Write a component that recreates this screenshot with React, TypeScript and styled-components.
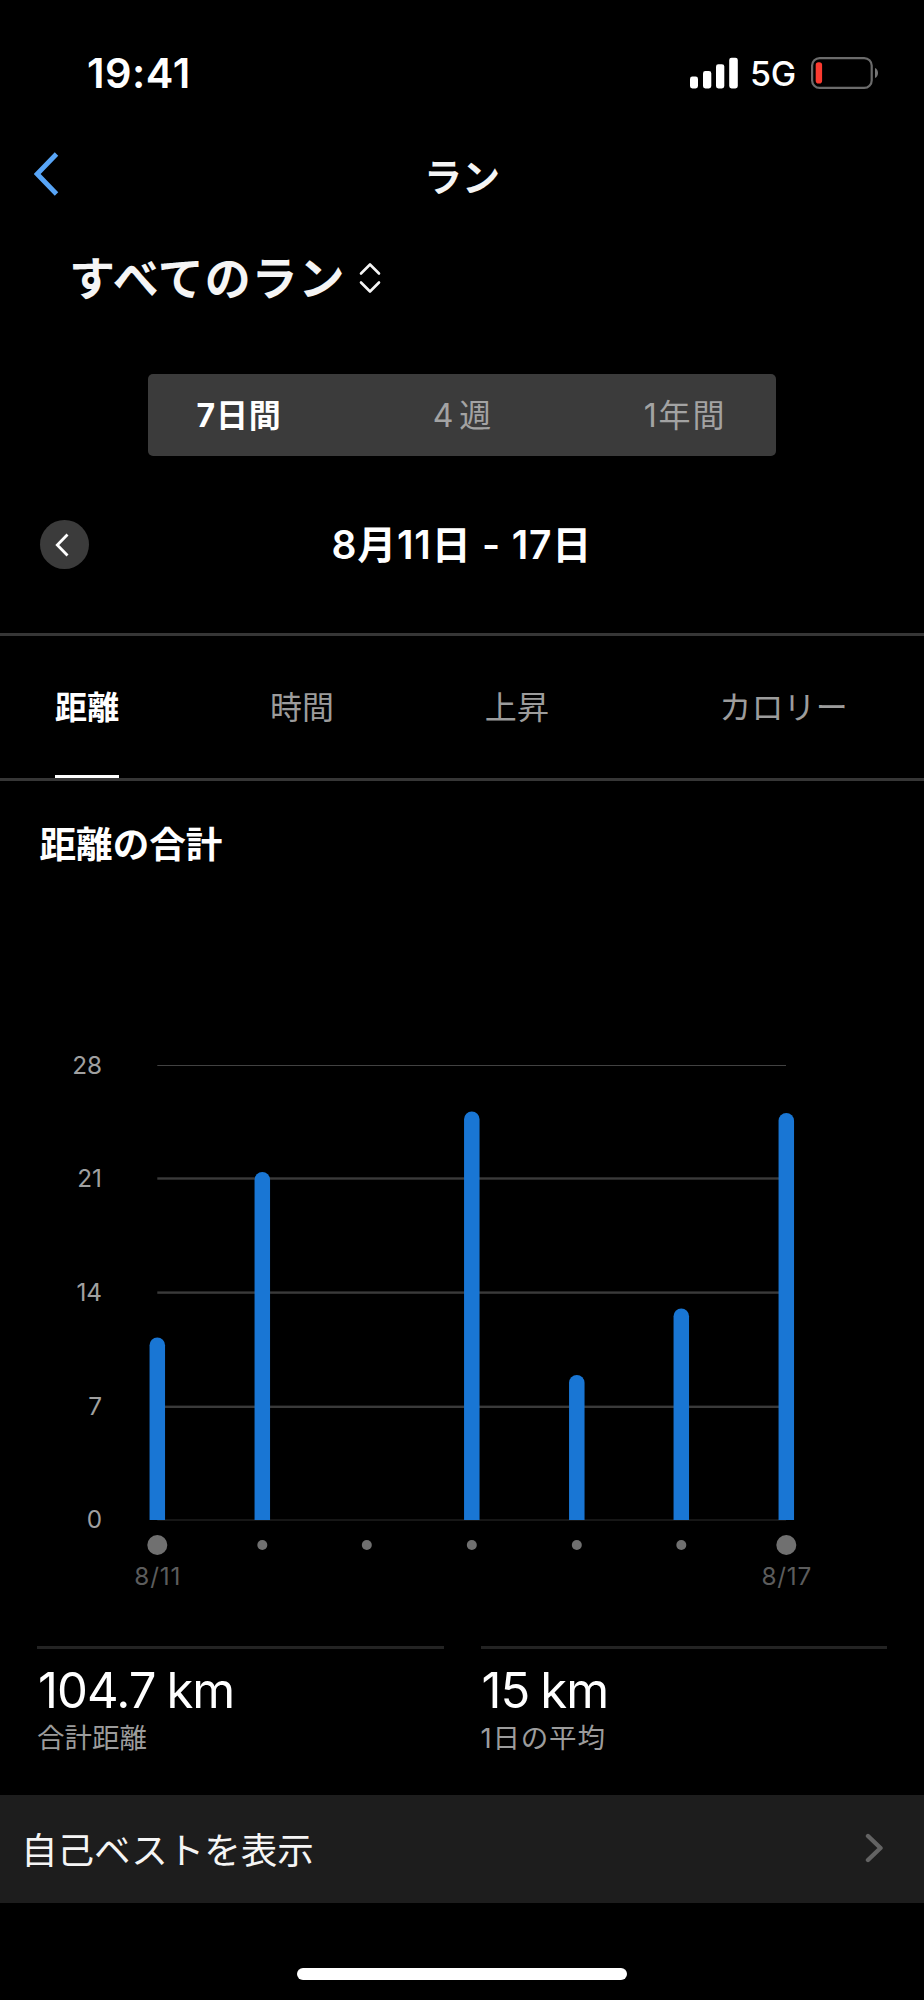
import React from "react";
import styled, { createGlobalStyle } from "styled-components";

const Global = createGlobalStyle`
  * { box-sizing: border-box; }
  body {
    margin: 0;
    background: #000;
    color: #fff;
    font-family: Inter, "Noto Sans CJK JP", sans-serif;
    white-space: nowrap;
  }
`;

const Screen = styled.main`
  width: 924px;
  height: 2000px;
  background: #000;
  display: flex;
  flex-direction: column;
  overflow: hidden;
`;

const StatusBar = styled.header`
  height: 132px;
  padding: 14px 46px 0 87px;
  display: flex;
  align-items: center;
  justify-content: space-between;
`;

const Clock = styled.time`
  font-size: 41.5px;
  font-weight: 600;
  letter-spacing: 0.5px;
  line-height: 50px;
`;

const StatusIcons = styled.div`
  display: flex;
  align-items: center;
`;

const Network = styled.span`
  font-size: 34px;
  font-weight: 450;
  letter-spacing: -0.2px;
  line-height: 40px;
  margin: 2px 15px 0 12px;
`;

const NavBar = styled.nav`
  height: 88px;
  padding: 0 34px;
  display: grid;
  grid-template-columns: 60px 1fr 60px;
  align-items: center;
`;

const BackIcon = styled.svg`
  margin-bottom: 4px;
`;

const NavTitle = styled.h1`
  margin: 1px 0 0;
  text-align: center;
  font-size: 38px;
  font-weight: 700;
  line-height: 50px;
  color: #f5f5f5;
`;

const Filter = styled.button`
  all: unset;
  display: flex;
  align-items: center;
  gap: 14px;
  height: 116px;
  padding-left: 69px;
  font-size: 46px;
  font-weight: 700;
  letter-spacing: 0.9px;
  line-height: 60px;
  color: #f5f5f5;
`;

const Segments = styled.div`
  width: 628px;
  height: 82px;
  margin: 38px auto 0;
  border-radius: 5px;
  background: #3b3b3b;
  display: flex;
  justify-content: space-between;
`;

const Segment = styled.button<{ $active?: boolean; $tracking?: number }>`
  all: unset;
  width: 182px;
  text-align: center;
  font-size: 32px;
  line-height: 83px;
  letter-spacing: ${(p) => p.$tracking ?? 0}px;
  word-spacing: -3px;
  font-weight: ${(p) => (p.$active ? 700 : 400)};
  color: ${(p) => (p.$active ? "#fff" : "#a3a3a3")};
`;

const DateRow = styled.div`
  height: 177px;
  padding: 0 40px 0 39.5px;
  display: grid;
  grid-template-columns: 49px 1fr 49px;
  align-items: center;
`;

const RoundButton = styled.button`
  all: unset;
  box-sizing: border-box;
  width: 49px;
  height: 49px;
  padding-right: 4px;
  border-radius: 50%;
  background: #3b3b3b;
  display: flex;
  align-items: center;
  justify-content: center;
`;

const DateRange = styled.div`
  text-align: center;
  font-size: 39px;
  font-weight: 600;
  letter-spacing: 0.8px;
  line-height: 50px;
`;

const Tabs = styled.div`
  height: 148px;
  border-top: 3px solid #363636;
  border-bottom: 3px solid #363636;
  padding: 0 77px 0 55px;
  display: flex;
`;

const Tab = styled.button<{ $active?: boolean; $gap?: number }>`
  all: unset;
  height: 142px;
  box-sizing: border-box;
  margin-left: ${(p) => p.$gap ?? 0}px;
  border-bottom: 3px solid ${(p) => (p.$active ? "#fff" : "transparent")};
  font-size: 32px;
  letter-spacing: 0.2px;
  line-height: 143px;
  font-weight: ${(p) => (p.$active ? 700 : 400)};
  color: ${(p) => (p.$active ? "#fff" : "#9c9c9c")};
`;

const SectionTitle = styled.h2`
  margin: 38px 0 0 39.5px;
  font-size: 36.6px;
  line-height: 52px;
  font-weight: 700;
`;

const ChartArea = styled.svg`
  display: block;
  margin-top: 157px;
  width: 924px;
  height: 618px;
  flex: none;
`;

const Stats = styled.section`
  height: 149px;
  padding: 0 37px;
  display: grid;
  grid-template-columns: 1fr 1fr;
  gap: 37px;
`;

const Stat = styled.div`
  border-top: 3px solid #232323;
`;

const StatValue = styled.div`
  margin-top: 12px;
  padding-left: 1px;
  font-size: 49px;
  line-height: 60px;
  letter-spacing: -0.9px;
  word-spacing: -2px;
`;

const StatLabel = styled.div<{ $tracking?: number }>`
  font-size: 27.5px;
  line-height: 34px;
  letter-spacing: ${(p) => p.$tracking ?? 0}px;
  color: #9c9c9c;
`;

const BestsRow = styled.button`
  all: unset;
  box-sizing: border-box;
  width: 924px;
  height: 108px;
  padding: 0 40px 2px 21px;
  background: #1d1d1d;
  display: flex;
  align-items: center;
  justify-content: space-between;
  font-size: 36.5px;
  color: #f5f5f5;
`;

const HomeIndicator = styled.div`
  width: 330px;
  height: 12px;
  border-radius: 6px;
  background: #fff;
  margin: 65px auto 0;
`;

const CHART_TOP = 1028;
const BASE = 1520 - CHART_TOP;

const gridLines = [
  { label: "28", y: 1065.5, thickness: 1, color: "#424242" },
  { label: "21", y: 1178.5, thickness: 2.4, color: "#3a3a3a" },
  { label: "14", y: 1292.6, thickness: 2.4, color: "#3a3a3a" },
  { label: "7", y: 1406.8, thickness: 2.4, color: "#3a3a3a" },
  { label: "0", y: 1520, thickness: 1.6, color: "#1c1c1c" },
];

const days: { x: number; top?: number; label?: string }[] = [
  { x: 157.3, top: 1337.5, label: "8/11" },
  { x: 262.3, top: 1172 },
  { x: 366.8 },
  { x: 471.8, top: 1111.5 },
  { x: 576.8, top: 1375 },
  { x: 681.3, top: 1308.5 },
  { x: 786.3, top: 1113, label: "8/17" },
];

function DistanceChart() {
  return (
    <ChartArea viewBox="0 0 924 618">
      {gridLines.map((g) => {
        const y = g.y - CHART_TOP;
        return (
          <g key={g.label}>
            <rect x="157.3" y={y - g.thickness / 2} width="628.7" height={g.thickness} fill={g.color} />
            <text x="102" y={y + 8} fontSize="24.3" textAnchor="end" fill="#a0a0a0">
              {g.label}
            </text>
          </g>
        );
      })}
      {days.map((d) => {
        const top = (d.top ?? 0) - CHART_TOP;
        return (
          <g key={d.x}>
            {d.top && (
              <path
                d={`M${d.x - 7.75} ${BASE}V${top + 7.75}a7.75 7.75 0 0 1 15.5 0V${BASE}z`}
                fill="#1976d4"
              />
            )}
            <circle cx={d.x} cy={1545 - CHART_TOP} r={d.label ? 10 : 5} fill="#707070" />
            {d.label && (
              <text
                x={d.x + 0.4}
                y={1585 - CHART_TOP}
                fontSize="24.3"
                letterSpacing="0.8"
                textAnchor="middle"
                fill="#5c5c5c"
              >
                {d.label}
              </text>
            )}
          </g>
        );
      })}
    </ChartArea>
  );
}

export default function App() {
  return (
    <Screen>
      <Global />
      <StatusBar>
        <Clock>19:41</Clock>
        <StatusIcons>
          <svg width="48" height="32" viewBox="0 0 48 32" fill="#fff">
            <rect x="0" y="19.5" width="8" height="12" rx="2.4" />
            <rect x="13" y="14" width="8.3" height="17.5" rx="2.4" />
            <rect x="26" y="7.2" width="8.3" height="24.3" rx="2.4" />
            <rect x="39.2" y="0.7" width="8.6" height="30.8" rx="2.4" />
          </svg>
          <Network>5G</Network>
          <svg width="67" height="32" viewBox="0 0 67 32">
            <rect x="1.1" y="1.1" width="59.6" height="29.8" rx="7.5" fill="none" stroke="#6b6b6b" strokeWidth="2.2" />
            <rect x="4.7" y="5.2" width="6.4" height="21.4" rx="2.8" fill="#fb3b30" />
            <path d="M64 11c4 1.5 4 8.5 0 10z" fill="#757575" />
          </svg>
        </StatusIcons>
      </StatusBar>

      <NavBar>
        <BackIcon width="26" height="44" viewBox="0 0 26 44" fill="none" stroke="#58a5f7" strokeWidth="4.8">
          <path d="M22.5 2 3.200 22l19.300 20" />
        </BackIcon>
        <NavTitle>ラン</NavTitle>
      </NavBar>

      <Filter>
        すべてのラン
        <svg width="22" height="32" viewBox="0 0 22 32" fill="none" stroke="#f5f5f5" strokeWidth="2.6" strokeLinecap="round" strokeLinejoin="round">
          <path d="M2 11.500 11 2.500l9 9M2 20.500l9 9 9-9" />
        </svg>
      </Filter>

      <Segments>
        <Segment $active $tracking={0.8}>7日間</Segment>
        <Segment>4 週</Segment>
        <Segment $tracking={1.8}>1年間</Segment>
      </Segments>

      <DateRow>
        <RoundButton>
          <svg width="16" height="24" viewBox="0 0 16 24" fill="none" stroke="#fff" strokeWidth="2.8">
            <path d="M13.500 1.500 3.300 12l10.200 10.500" />
          </svg>
        </RoundButton>
        <DateRange>8月11日 - 17日</DateRange>
      </DateRow>

      <Tabs>
        <Tab $active>距離</Tab>
        <Tab $gap={150.5}>時間</Tab>
        <Tab $gap={150.5}>上昇</Tab>
        <Tab $gap={170}>カロリー</Tab>
      </Tabs>

      <SectionTitle>距離の合計</SectionTitle>
      <DistanceChart />

      <Stats>
        <Stat>
          <StatValue>104.7 km</StatValue>
          <StatLabel>合計距離</StatLabel>
        </Stat>
        <Stat>
          <StatValue>15 km</StatValue>
          <StatLabel $tracking={0.8}>1日の平均</StatLabel>
        </Stat>
      </Stats>

      <BestsRow>
        自己ベストを表示
        <svg width="19" height="30" viewBox="0 0 19 30" fill="none" stroke="#636363" strokeWidth="4.4" strokeLinecap="round" strokeLinejoin="round">
          <path d="M3 3l12.500 12L3 27" />
        </svg>
      </BestsRow>
      <HomeIndicator />
    </Screen>
  );
}
